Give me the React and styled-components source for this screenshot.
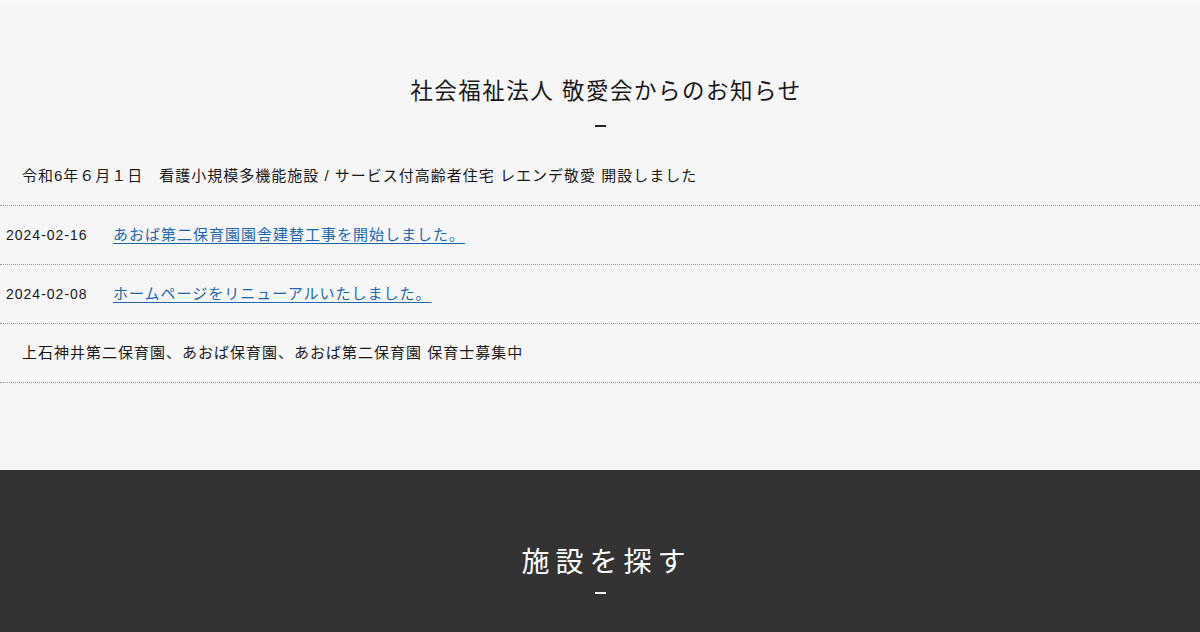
import styled, { createGlobalStyle } from "styled-components";

const GlobalStyle = createGlobalStyle`
  html, body {
    margin: 0;
    padding: 0;
    background: #f6f6f6;
  }
  body {
    font-family: "Liberation Sans", "Noto Sans CJK JP", sans-serif;
    color: #222;
  }
`;

const NewsSection = styled.section`
  background: #f6f6f6;
  border-top: 1px solid #fbfbfb;
  padding: 74px 0 87px 0;
`;

const SectionTitle = styled.h2`
  margin: 0;
  padding-left: 12px;
  text-align: center;
  font-size: 22.5px;
  font-weight: 400;
  line-height: 33px;
  letter-spacing: 1.5px;
  color: ${(p) => (p.$dark ? "#fff" : "#1a1a1a")};
  ${(p) =>
    p.$dark &&
    `
    font-size: 28px;
    line-height: 42px;
    letter-spacing: 6px;
    padding-left: 13px;
  `}
`;

const Dash = styled.div`
  width: 11px;
  height: 2px;
  margin: ${(p) => (p.$dark ? "8px" : "17px")} auto 0 auto;
  background: ${(p) => (p.$dark ? "#eee" : "#222")};
`;

const NewsList = styled.ul`
  list-style: none;
  margin: 20px 0 0 0;
  padding: 0;
`;

const NewsRow = styled.li`
  box-sizing: border-box;
  display: flex;
  align-items: center;
  height: 59px;
  padding: 0 0 4px ${(p) => (p.$plain ? "22px" : "6px")};
  border-bottom: 1px dotted #9a9a9a;
  font-size: 15px;
  letter-spacing: 1px;
  color: #1a1a1a;
`;

const Entry = styled.div`
  display: flex;
  align-items: baseline;
`;

const NewsDate = styled.span`
  font-size: 14px;
  width: 107px;
  flex-shrink: 0;
  color: #1a1a1a;
`;

const NewsLink = styled.a`
  color: #1f68ad;
  text-decoration: underline;
  text-underline-offset: 3px;
`;

const SearchSection = styled.section`
  background: #333333;
  padding: 72px 0 40px 0;
`;

const news = [
  {
    text: "令和6年６月１日　看護小規模多機能施設 / サービス付高齢者住宅 レエンデ敬愛 開設しました",
  },
  { date: "2024-02-16", text: "あおば第二保育園園舎建替工事を開始しました。", link: true },
  { date: "2024-02-08", text: "ホームページをリニューアルいたしました。", link: true },
  { text: "上石神井第二保育園、あおば保育園、あおば第二保育園 保育士募集中" },
];

const App = () => {
  return (
    <>
      <GlobalStyle />
      <NewsSection>
        <SectionTitle>社会福祉法人 敬愛会からのお知らせ</SectionTitle>
        <Dash />
        <NewsList>
          {news.map((item, i) => (
            <NewsRow key={i} $plain={!item.date}>
              <Entry>
                {item.date && <NewsDate>{item.date}</NewsDate>}
                {item.link ? (
                  <NewsLink href="#">{item.text}</NewsLink>
                ) : (
                  <span>{item.text}</span>
                )}
              </Entry>
            </NewsRow>
          ))}
        </NewsList>
      </NewsSection>
      <SearchSection>
        <SectionTitle $dark>施設を探す</SectionTitle>
        <Dash $dark />
      </SearchSection>
    </>
  );
};

export default App;
